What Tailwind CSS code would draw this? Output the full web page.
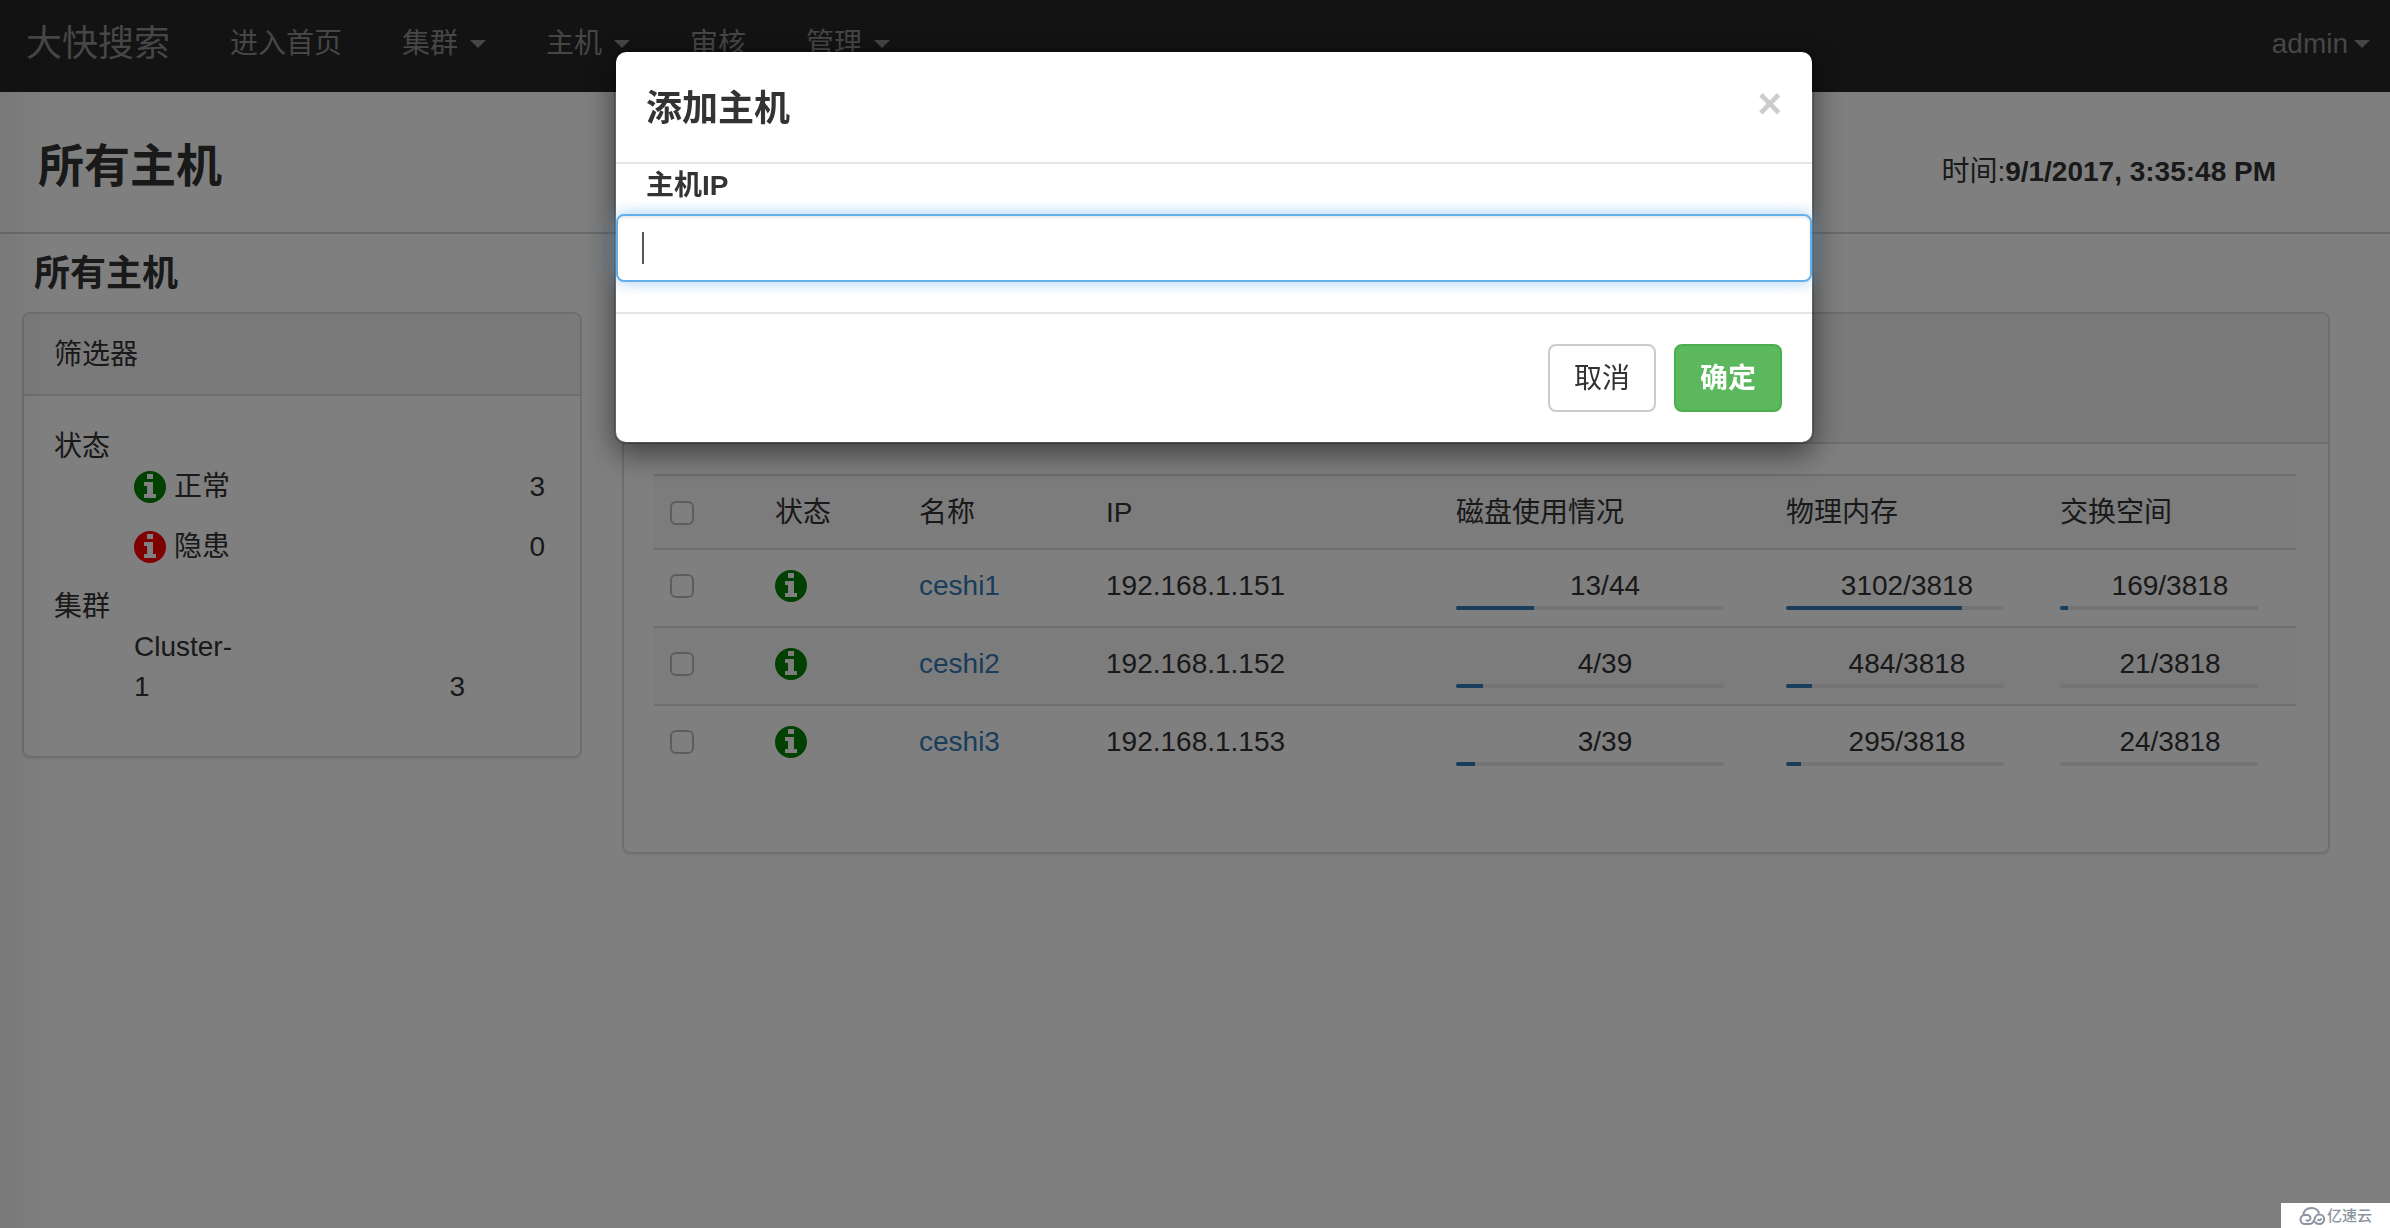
<!DOCTYPE html>
<html lang="zh-CN">
<head>
<meta charset="utf-8">
<meta name="viewport" content="width=device-width, initial-scale=1">
<title>所有主机</title>
<script src="https://cdn.jsdelivr.net/npm/@tailwindcss/browser@4"></script>
</head>
<body class="min-h-screen bg-white font-['Liberation_Sans','Noto_Sans_CJK_SC',sans-serif] text-[28px] leading-10 text-[#333]">

<svg class="hidden" aria-hidden="true">
  <symbol id="info" viewBox="0 0 32 32"><path fill="currentColor" fill-rule="evenodd" d="M16 0a16 16 0 1 0 0 32a16 16 0 0 0 0-32zM13 3h6v5h-6zM10 11h9v12h3v4H10v-4h3v-8h-3z"/></symbol>
  <symbol id="caret" viewBox="0 0 16 8"><path fill="currentColor" d="M0 0h16l-8 8z"/></symbol>
</svg>

<nav class="flex h-[92px] items-start justify-between bg-[#262626] pl-[26px] pr-5 pt-6 text-[#8c8c8c]">
  <div class="flex items-center gap-[60px]">
    <a href="#" class="text-4xl leading-10">大快搜索</a>
    <a href="#">进入首页</a>
    <a href="#" class="flex items-center gap-3">集群<svg class="h-2 w-4"><use href="#caret"/></svg></a>
    <a href="#" class="flex items-center gap-3">主机<svg class="h-2 w-4"><use href="#caret"/></svg></a>
    <a href="#">审核</a>
    <a href="#" class="flex items-center gap-3">管理<svg class="h-2 w-4"><use href="#caret"/></svg></a>
  </div>
  <a href="#" class="flex items-center gap-1.5">admin<svg class="h-2 w-4"><use href="#caret"/></svg></a>
</nav>

<header class="flex h-[142px] items-center justify-between border-b-2 border-[#d4d4d4] pl-[38px] pr-[114px]">
  <h1 class="pt-2 text-[46px] font-bold leading-[60px]">所有主机</h1>
  <p class="pt-5">时间:<b>9/1/2017, 3:35:48 PM</b></p>
</header>

<main class="pl-[22px] pr-[60px] pt-5">
  <h2 class="mb-[18px] pl-3 text-4xl font-bold leading-10">所有主机</h2>
  <div class="flex items-start gap-10">
    <section class="w-[560px] shrink-0 rounded-lg border-2 border-[#ddd] shadow-[0_2px_2px_rgba(0,0,0,0.05)]">
      <h3 class="rounded-t-md border-b-2 border-[#ddd] bg-[#f5f5f5] px-[30px] pb-[19px] pt-[21px]">筛选器</h3>
      <dl class="px-[30px] pb-[49px] pt-[31px]">
        <dt>状态</dt>
        <dd class="mb-5 flex items-center pl-20 pr-[5px]">
          <svg class="mr-2 size-8 text-[#008000]"><use href="#info"/></svg>正常<span class="ml-auto">3</span>
        </dd>
        <dd class="mb-5 flex items-center pl-20 pr-[5px]">
          <svg class="mr-2 size-8 text-[#ff0000]"><use href="#info"/></svg>隐患<span class="ml-auto">0</span>
        </dd>
        <dt>集群</dt>
        <dd class="flex items-end justify-between pl-20 pr-[85px]"><span class="w-[104px]">Cluster-1</span><span>3</span></dd>
      </dl>
    </section>

    <section class="min-w-0 flex-1 rounded-lg border-2 border-[#ddd] shadow-[0_2px_2px_rgba(0,0,0,0.05)]">
      <div class="h-[130px] rounded-t-md border-b-2 border-[#ddd] bg-[#f5f5f5]"></div>
      <div class="pb-[70px] pl-[30px] pr-8 pt-[30px]">
        <table class="w-full table-fixed border-separate border-spacing-0 text-left">
          <colgroup>
            <col class="w-[105px]"><col class="w-[144px]"><col class="w-[187px]"><col class="w-[350px]"><col class="w-[330px]"><col class="w-[274px]"><col class="w-[252px]">
          </colgroup>
          <thead>
            <tr class="bg-[#f9f9f9] *:border-t-2 *:border-[#ddd] *:px-4 *:pb-[15px] *:pt-[17px] *:font-normal">
              <th><input type="checkbox" aria-label="全选" class="block size-6 appearance-none rounded-md border-2 border-[#bbb] bg-white"></th>
              <th>状态</th><th>名称</th><th>IP</th><th>磁盘使用情况</th><th>物理内存</th><th>交换空间</th>
            </tr>
          </thead>
          <tbody id="hosts"></tbody>
        </table>
      </div>
    </section>
  </div>
</main>

<div class="fixed inset-0 bg-black/50"></div>
<div class="fixed inset-y-0 left-0 w-12 bg-linear-to-r from-black/5 to-transparent"></div>

<div class="fixed inset-0 flex items-start justify-center pl-[38px] pt-[50px]">
  <form role="dialog" aria-labelledby="dialog-title" class="w-[1200px] rounded-xl border-2 border-black/20 bg-white bg-clip-padding shadow-[0_10px_30px_rgba(0,0,0,0.5)]">
    <div class="flex items-start justify-between border-b-2 border-[#e5e5e5] px-[30px] pb-7 pt-8">
      <h4 id="dialog-title" class="text-4xl font-bold leading-[50px]">添加主机</h4>
      <button type="button" aria-label="关闭" class="text-[42px] font-bold leading-10 text-[#ccc]">×</button>
    </div>
    <label for="host-ip" class="mb-2 block pl-[30px] pt-0.5 font-bold">主机IP</label>
    <div class="relative mb-[30px]">
      <input id="host-ip" type="text" class="block h-[68px] w-full rounded-lg border-2 border-[#66afe9] bg-white px-6 text-[#555] caret-transparent shadow-[inset_0_2px_2px_rgba(0,0,0,0.075),0_0_16px_rgba(102,175,233,0.6)] outline-none">
      <span class="absolute left-[26px] top-[18px] h-8 w-0.5 bg-[#555]"></span>
    </div>
    <div class="flex justify-end gap-[18px] border-t-2 border-[#e5e5e5] p-[30px]">
      <button type="button" class="rounded-lg border-2 border-[#ccc] bg-white px-6 pb-[11px] pt-[13px]">取消</button>
      <button type="submit" class="rounded-lg border-2 border-[#4cae4c] bg-[#5cb85c] px-6 pb-[11px] pt-[13px] font-bold text-white">确定</button>
    </div>
  </form>
</div>

<div class="fixed bottom-0 right-0 flex h-[25px] w-[109px] items-center gap-0.5 bg-white pl-[18px] text-[15px] font-medium leading-5 text-[#8b94a0]">
  <svg class="h-[18px] w-[26px]" viewBox="0 0 26 18" fill="none" stroke="currentColor" stroke-width="2">
    <path d="M4.500 8C4.500 3.500 8 1 12.500 1c4 0 7 2.500 7.500 5.500"/>
    <path d="M7 13c1 1 4.500 1 4.500-1.800a3.200 3.200 0 0 0-3.300-3.200H6a4.500 4.500 0 0 0 0 9h4.500c3.500 0 4.500-2.500 5.300-5.500a4.700 4.700 0 1 1 4.700 5.500c-2.500 0-4-1-4.500-2.500M18.500 12.500c1.500 1.500 4 .5 3.500-1.300"/>
  </svg>亿速云
</div>

<script>
  const hosts = [
    { name: 'ceshi1', ip: '192.168.1.151', usage: [['13/44', 29], ['3102/3818', 81], ['169/3818', 4]] },
    { name: 'ceshi2', ip: '192.168.1.152', usage: [['4/39', 10], ['484/3818', 12], ['21/3818', 0]] },
    { name: 'ceshi3', ip: '192.168.1.153', usage: [['3/39', 7], ['295/3818', 7], ['24/3818', 0]] },
  ];
  document.getElementById('hosts').innerHTML = hosts.map(h => `
    <tr class="even:bg-[#f9f9f9] *:border-t-2 *:border-[#ddd] *:p-4 *:align-top">
      <td><input type="checkbox" aria-label="${h.name}" class="mt-2 block size-6 appearance-none rounded-md border-2 border-[#bbb] bg-white"></td>
      <td><svg class="mt-1 size-8 text-[#008000]"><use href="#info"/></svg></td>
      <td><a href="#" class="text-[#337ab7]">${h.name}</a></td>
      <td>${h.ip}</td>
      ${h.usage.map(([text, percent]) => `
      <td class="text-center">${text}
        <div class="h-1 w-9/10 overflow-hidden rounded-xs bg-[#e8e8e8]"><div class="h-full bg-[#337ab7]" style="width:${percent}%"></div></div>
      </td>`).join('')}
    </tr>`).join('');
</script>
</body>
</html>
